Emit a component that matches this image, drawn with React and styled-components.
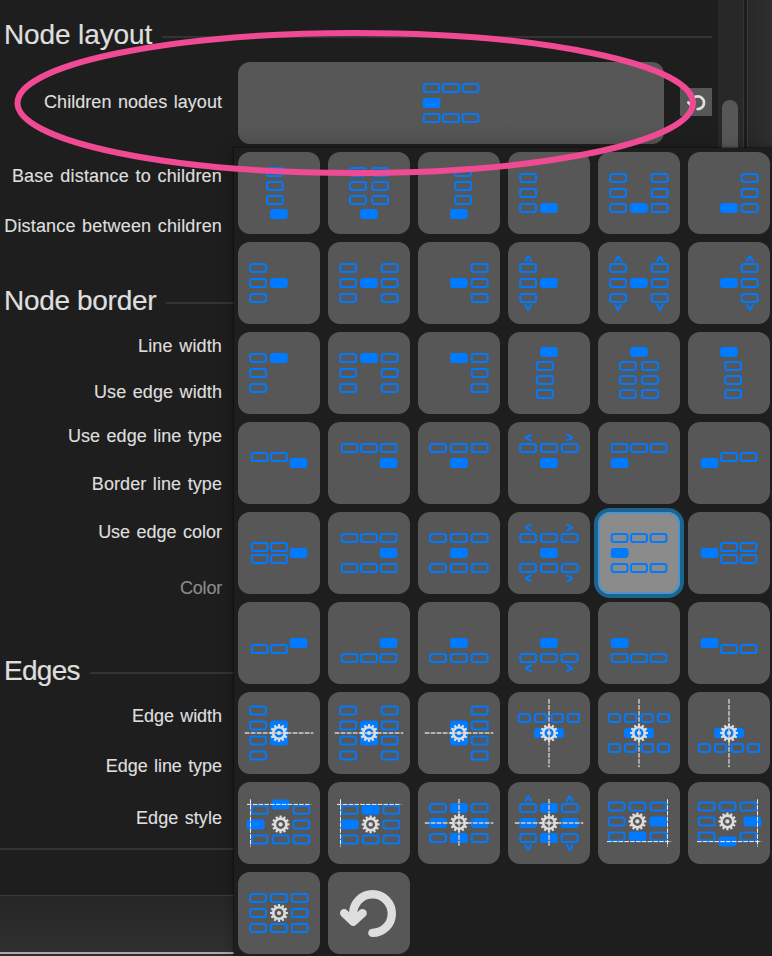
import React from "react";
import styled, { createGlobalStyle } from "styled-components";

const Global = createGlobalStyle`
  *, *::before, *::after { box-sizing: border-box; }
  body {
    margin: 0;
    background: #1e1e1e;
    color: #dedede;
    font-family: "Liberation Sans", Arial, sans-serif;
    overflow: hidden;
  }
`;

const Screen = styled.div`
  position: relative;
  display: flex;
  width: 772px;
  height: 956px;
  overflow: hidden;
  background: #1e1e1e;
`;

const Panel = styled.main`
  display: flex;
  flex-direction: column;
  width: 718px;
`;

const Track = styled.div`
  width: 25px;
  padding: 100px 5px 0 4px;
  background: #282828;
`;

const Thumb = styled.div`
  height: 500px;
  border-radius: 8px;
  background: #575757;
`;

const Splitter = styled.div`
  width: 5px;
  border-left: 1px solid #353535;
  border-right: 1px solid #3a3a3a;
  background: #1c1c1c;
`;

const Canvas = styled.div`
  flex: 1;
  background: linear-gradient(90deg, #282828, #2e2e2e);
`;

const SectionHeading = styled.h2`
  display: flex;
  align-items: center;
  flex: none;
  gap: 10px;
  height: 44px;
  margin: ${(p) => p.$gap}px 6px 0 4px;
  font-size: 28px;
  line-height: 44px;
  font-weight: 400;
  white-space: nowrap;
  letter-spacing: ${(p) => p.$spacing || 0}px;
  -webkit-text-stroke: 0.2px currentColor;

  &::after {
    content: "";
    flex: 1;
    height: 2px;
    margin-top: 4px;
    background: #333;
  }
`;

const Row = styled.div`
  display: flex;
  align-items: center;
  flex: none;
  height: ${(p) => p.$height || 36}px;
  margin-top: ${(p) => p.$gap || 0}px;
  padding-right: 6px;
`;

const Label = styled.span`
  width: 222px;
  margin-bottom: ${(p) => p.$lift || 0}px;
  text-align: right;
  font-size: 18px;
  line-height: 22px;
  letter-spacing: ${(p) => p.$spacing ?? 0.1}px;
  word-spacing: 1.4px;
  white-space: nowrap;
  color: ${(p) => (p.$muted ? "#8c8c8c" : "#dedede")};
  -webkit-text-stroke: 0.15px currentColor;
`;

const LayoutButton = styled.button`
  display: flex;
  align-items: center;
  justify-content: center;
  width: 426px;
  height: 82px;
  margin: 0 16px;
  padding: 0;
  border: 0;
  border-radius: 12px;
  background: linear-gradient(#575757 70%, #525252);
`;

const ResetButton = styled.button`
  display: flex;
  align-items: center;
  justify-content: center;
  width: 32px;
  height: 28px;
  margin-bottom: 2px;
  padding: 0;
  border: 0;
  background: #575757;
`;

const Divider = styled.div`
  flex: none;
  height: 2px;
  margin-top: 12px;
  background: #333;
`;

const Footer = styled.div`
  flex: none;
  height: 59px;
  margin-top: 45px;
  border-top: 1px solid #3b3b3b;
  border-bottom: 2px solid #aaa;
  background: linear-gradient(#262626, #303030);
`;

const FooterEdge = styled.div`
  flex: 1;
  background: #2e2e2e;
`;

const Picker = styled.div`
  position: absolute;
  left: 234px;
  top: 148px;
  display: grid;
  grid-template-columns: repeat(6, 82px);
  grid-auto-rows: 82px;
  gap: 8px;
  width: 540px;
  padding: 4px;
  background: #1e1e1e;
  box-shadow: 0 0 1px 1px rgba(0, 0, 0, 0.3), 0 2px 14px rgba(0, 0, 0, 0.3);
`;

const Tile = styled.button`
  width: 82px;
  height: 82px;
  padding: 0;
  border: 0;
  border-radius: 12px;
  background: ${(p) => (p.$selected ? "#8b8b8b" : "#575757")};
  box-shadow: ${(p) =>
    p.$selected ? "0 0 0 4px #1d638f, inset 0 0 0 2px #4e95c5" : "none"};
`;

const Drawing = styled.svg`
  display: block;
  fill: none;
`;

const Annotation = styled.svg`
  position: absolute;
  left: 0;
  top: 0;
  pointer-events: none;
`;

const BLUE = "#007aff";
const LIGHT = "#dedede";

const Node = ({ x, y, w = 17.8, h = 10, solid }) =>
  solid ? (
    <rect x={x} y={y} width={w} height={h} rx="3" fill={BLUE} />
  ) : (
    <rect x={x + 1} y={y + 1} width={w - 2} height={h - 2} rx="2" stroke={BLUE} strokeWidth="2" />
  );

const ARROWS = {
  up: "M-3.2 3.2 L0 -2.8 L3.2 3.2",
  down: "M-3.2 -3.2 L0 2.8 L3.2 -3.2",
  left: "M3.4 -3.3 L-2.8 0 L3.4 3.3",
  right: "M-3.4 -3.3 L2.8 0 L-3.4 3.3",
};

const Arrow = ({ x, y, dir }) => (
  <path d={ARROWS[dir]} transform={`translate(${x} ${y})`} stroke={BLUE} strokeWidth="2" strokeLinejoin="bevel" />
);

const TEETH = 12;
const Gear = ({ x, y }) => (
  <g transform={`translate(${x} ${y})`} stroke={LIGHT}>
    <circle r="5.8" strokeWidth="2.6" />
    {Array.from({ length: TEETH }, (_, i) => (
      <path key={i} d="M0 -6.4V-8.9" strokeWidth="2.2" transform={`rotate(${(i * 360) / TEETH})`} />
    ))}
    <circle r="2.1" fill={LIGHT} stroke="none" />
  </g>
);

const Dashes = ({ d, thin }) => (
  <path
    d={d}
    stroke={thin ? "#f0f0f0" : "#b4b4b4"}
    strokeWidth={thin ? 1 : 1.8}
    strokeDasharray={thin ? "4.6 1.2" : "4.7 1.3"}
  />
);

const UndoGlyph = () => (
  <g stroke={LIGHT} strokeLinecap="round" strokeLinejoin="round">
    <path d="M44.4 60.9 A19.3 19.3 0 1 0 25.2 41.6 V49" strokeWidth="8.4" />
    <path d="M16.2 41.2 L25.3 49.7 L34.6 41.2" strokeWidth="8.4" />
  </g>
);

const C = [11.2, 32, 52.8];
const T = [12.7, 32.1, 51.6];
const Q = [9.8, 26, 42.6, 58.9];
const ROWS = [21, 36, 51];
const STACK = [13.5, 28.5, 43.5, 58.5];

const cross = (xs, ys) => xs.flatMap((x) => ys.map((y) => [x, y]));
const quarter = (y) => Q.map((x) => [x, y, 13.2]);
const vArrows = (...xs) => xs.flatMap((x) => [[x, 16.6, "up"], [x, 65.4, "down"]]);
const hArrows = (...ys) => ys.flatMap((y) => [[20.2, y, "left"], [61.8, y, "right"]]);

const H_AXIS = "M6.8 41H75.3";
const V_AXIS = "M41 7V75.3";
const V_SHORT = "M41 17V65";

const SELECTED = { open: cross(T, [21, 51]), fill: [[T[0], 36]] };

const mixed = {
  open: [[C[0], 21], [C[2], 21], [C[0], 51], [C[2], 51]],
  fill: [[32, 21], [C[0], 36], [C[2], 36], [32, 51]],
  axes: [H_AXIS, V_SHORT],
  gear: [41, 41],
};

const LAYOUTS = [
  { open: cross([28], [15, 29, 43]), fill: [[32, 57]] },
  { open: cross([21, 43.2], [15, 29, 43]), fill: [[32, 57]] },
  { open: cross([36.2], [15, 29, 43]), fill: [[32, 57]] },
  { open: cross([C[0]], ROWS), fill: [[32, 51]] },
  { open: cross([C[0], C[2]], ROWS), fill: [[32, 51]] },
  { open: cross([C[2]], ROWS), fill: [[32, 51]] },

  { open: cross([C[0]], ROWS), fill: [[32, 36]] },
  { open: cross([C[0], C[2]], ROWS), fill: [[32, 36]] },
  { open: cross([C[2]], ROWS), fill: [[32, 36]] },
  { open: cross([C[0]], ROWS), fill: [[32, 36]], arrows: vArrows(20.2) },
  { open: cross([C[0], C[2]], ROWS), fill: [[32, 36]], arrows: vArrows(20.2, 61.8) },
  { open: cross([C[2]], ROWS), fill: [[32, 36]], arrows: vArrows(61.8) },

  { open: cross([C[0]], ROWS), fill: [[32, 21]] },
  { open: cross([C[0], C[2]], ROWS), fill: [[32, 21]] },
  { open: cross([C[2]], ROWS), fill: [[32, 21]] },
  { open: cross([28], [29, 43, 57]), fill: [[32, 15]] },
  { open: cross([21, 43.2], [29, 43, 57]), fill: [[32, 15]] },
  { open: cross([36.2], [29, 43, 57]), fill: [[32, 15]] },

  { open: cross(T.slice(0, 2), [30]), fill: [[T[2], 36]] },
  { open: cross(T, [21]), fill: [[T[2], 36]] },
  { open: cross(C, [21]), fill: [[32, 36]] },
  { open: cross(C, [21]), fill: [[32, 36]], arrows: hArrows(15.6) },
  { open: cross(T, [21]), fill: [[T[0], 36]] },
  { open: cross(T.slice(1), [30]), fill: [[T[0], 36]] },

  { open: cross(T.slice(0, 2), [30, 42]), fill: [[T[2], 36]] },
  { open: cross(T, [21, 51]), fill: [[T[2], 36]] },
  { open: cross(C, [21, 51]), fill: [[32, 36]] },
  { open: cross(C, [21, 51]), fill: [[32, 36]], arrows: hArrows(15.6, 66.3) },
  { ...SELECTED, selected: true },
  { open: cross(T.slice(1), [30, 42]), fill: [[T[0], 36]] },

  { open: cross(T.slice(0, 2), [42]), fill: [[T[2], 36]] },
  { open: cross(T, [51]), fill: [[T[2], 36]] },
  { open: cross(C, [51]), fill: [[32, 36]] },
  { open: cross(C, [51]), fill: [[32, 36]], arrows: hArrows(66.3) },
  { open: cross(T, [51]), fill: [[T[0], 36]] },
  { open: cross(T.slice(1), [42]), fill: [[T[0], 36]] },

  { open: cross([C[0]], STACK), fill: [[32, 28.4, 18, 25.2]], axes: [H_AXIS], gear: [41, 41] },
  { open: cross([C[0], C[2]], STACK), fill: [[32, 28.4, 18, 25.2]], axes: [H_AXIS], gear: [41, 41] },
  { open: cross([C[2]], STACK), fill: [[32, 28.4, 18, 25.2]], axes: [H_AXIS], gear: [41, 41] },
  { open: quarter(21), fill: [[26, 36, 30]], axes: [V_AXIS], gear: [41, 41] },
  { open: [...quarter(21), ...quarter(51)], fill: [[26, 36, 30]], axes: [V_AXIS], gear: [41, 41] },
  { open: quarter(51), fill: [[26, 36, 30]], axes: [V_AXIS], gear: [41, 41] },

  {
    open: [[12.8, 22.7], [54.5, 22.7], [54.5, 37.6], [12.8, 52.5], [33.7, 52.5], [54.5, 52.5]],
    fill: [[33.7, 17.6], [8.8, 37.6]],
    guides: ["M9 22.4H73.3", "M12.5 17.3V64.7"],
    gear: [42.6, 42.4],
  },
  {
    open: [[12.8, 22.7], [54.5, 22.7], [54.5, 37.6], [12.8, 52.5], [33.7, 52.5], [54.5, 52.5]],
    fill: [[33.7, 22.7], [12.8, 37.6]],
    guides: ["M9 22.4H73.3", "M12.5 17.3V64.7"],
    gear: [42.6, 42.4],
  },
  mixed,
  { ...mixed, arrows: vArrows(20.2, 61.8) },
  {
    open: [[9.7, 19.6], [30.6, 19.6], [51.5, 19.6], [9.7, 34.6], [9.7, 49.5], [51.5, 49.5]],
    fill: [[51.5, 34.6], [30.6, 49.5]],
    guides: ["M9 59.6H73.3", "M69.5 17.3V64.7"],
    gear: [39.4, 39.4],
  },
  {
    open: [[9.7, 19.6], [30.6, 19.6], [51.5, 19.6], [9.7, 34.6], [9.7, 49.5], [51.5, 49.5]],
    fill: [[55.5, 34.6], [30.6, 54.5]],
    guides: ["M9 59.6H73.3", "M69.5 17.3V64.7"],
    gear: [39.4, 39.4],
  },

  { open: [...cross(C, [21, 51]), [C[0], 36], [C[2], 36]], gear: [41, 41] },
];

const LayoutDrawing = ({ layout }) => {
  const { open = [], fill = [], arrows = [], axes = [], guides = [], gear } = layout;
  return (
    <Drawing width="82" height="82" viewBox="0 0 82 82">
      {fill.map(([x, y, w, h], i) => <Node key={`f${i}`} x={x} y={y} w={w} h={h} solid />)}
      {open.map(([x, y, w, h], i) => <Node key={`o${i}`} x={x} y={y} w={w} h={h} />)}
      {arrows.map(([x, y, dir], i) => <Arrow key={`a${i}`} x={x} y={y} dir={dir} />)}
      {axes.map((d) => <Dashes key={d} d={d} />)}
      {guides.map((d) => <Dashes key={d} d={d} thin />)}
      {gear && <Gear x={gear[0]} y={gear[1]} />}
    </Drawing>
  );
};

const Field = ({ label, gap, muted, spacing }) => (
  <Row $gap={gap}>
    <Label $muted={muted} $spacing={spacing}>{label}</Label>
  </Row>
);

export default function App() {
  return (
    <>
      <Global />
      <Screen>
        <Panel>
          <SectionHeading $gap={13} $spacing={-0.12}>Node layout</SectionHeading>
          <Row $height={82} $gap={5}>
            <Label $lift={2} $spacing={0.05}>Children nodes layout</Label>
            <LayoutButton aria-label="Children nodes layout">
              <LayoutDrawing layout={SELECTED} />
            </LayoutButton>
            <ResetButton aria-label="Reset">
              <Drawing width="27" height="27" viewBox="0 0 82 82">
                <UndoGlyph />
              </Drawing>
            </ResetButton>
          </Row>
          <Field label="Base distance to children" gap={14} spacing={0.19} />
          <Field label="Distance between children" gap={14} spacing={0.15} />
          <SectionHeading $gap={35} $spacing={-0.32}>Node border</SectionHeading>
          <Field label="Line width" gap={5} spacing={0.15} />
          <Field label="Use edge width" gap={10} spacing={0.08} />
          <Field label="Use edge line type" gap={8} spacing={0.04} />
          <Field label="Border line type" gap={12} spacing={0.08} />
          <Field label="Use edge color" gap={12} spacing={0} />
          <Field label="Color" gap={20} spacing={-0.2} muted />
          <SectionHeading $gap={43} $spacing={-0.7}>Edges</SectionHeading>
          <Field label="Edge width" gap={5} spacing={-0.05} />
          <Field label="Edge line type" gap={14} spacing={-0.05} />
          <Field label="Edge style" gap={16} spacing={0.05} />
          <Divider />
          <Footer />
          <FooterEdge />
        </Panel>
        <Track>
          <Thumb />
        </Track>
        <Splitter />
        <Canvas />
        <Picker>
          {LAYOUTS.map((layout, i) => (
            <Tile key={i} $selected={layout.selected}>
              <LayoutDrawing layout={layout} />
            </Tile>
          ))}
          <Tile aria-label="Reset to default">
            <Drawing width="82" height="82" viewBox="0 0 82 82">
              <UndoGlyph />
            </Drawing>
          </Tile>
        </Picker>
        <Annotation width="772" height="200" viewBox="0 0 772 200" fill="none">
          <ellipse cx="355.2" cy="103" rx="337.7" ry="70" stroke="#f14a94" strokeWidth="6" />
        </Annotation>
      </Screen>
    </>
  );
}
